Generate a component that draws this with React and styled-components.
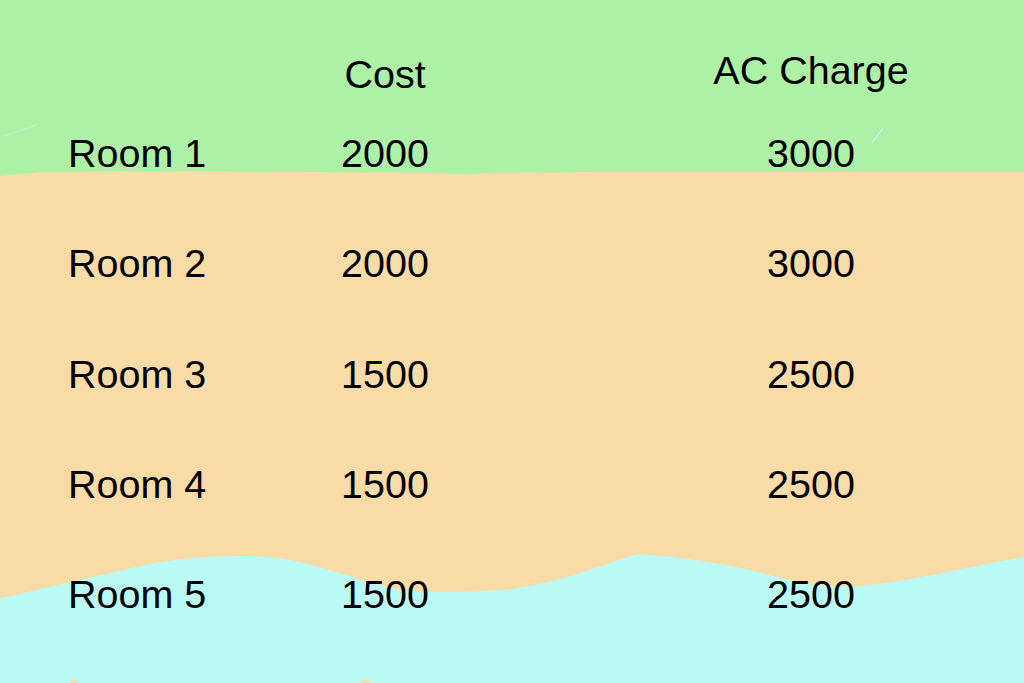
import React from "react";
import styled, { createGlobalStyle } from "styled-components";

const Global = createGlobalStyle`
  html, body { margin: 0; padding: 0; }
  body { font-family: "Liberation Sans", Arial, sans-serif; overflow: hidden; }
`;

const Page = styled.div`
  position: relative;
  width: 1024px;
  height: 683px;
  overflow: hidden;
  background: #f8dba6;
`;

const Backdrop = styled.svg`
  position: absolute;
  inset: 0;
  width: 100%;
  height: 100%;
  z-index: 0;
`;

const Table = styled.div`
  position: relative;
  z-index: 1;
  display: grid;
  grid-template-columns: 200px 234px 1fr;
  align-items: start;
  padding: 50px 0 0 68px;
  font-size: 39.5px;
  color: #000;
`;

const Cell = styled.div`
  line-height: ${(p) => p.$lh || "110.25px"};
  text-align: ${(p) => (p.$align === "left" ? "left" : "center")};
  padding-left: ${(p) => (p.$wide ? "96px" : "0")};
  white-space: nowrap;
`;

const rows = [
  ["Room 1", "2000", "3000"],
  ["Room 2", "2000", "3000"],
  ["Room 3", "1500", "2500"],
  ["Room 4", "1500", "2500"],
  ["Room 5", "1500", "2500"],
];

function Background() {
  return (
    <Backdrop viewBox="0 0 1024 683" preserveAspectRatio="none">
      <path
        d="M0 0 H1024 V172 L600 172 L460 173 L150 171 L40 172 L0 176 Z"
        fill="#adf1a6"
      />
      <path
        d="M0 598 C 40 590, 110 572, 160 562 C 200 556, 240 554, 280 558 C 320 564, 360 582, 400 590 C 440 594, 480 591, 512 589 C 560 582, 600 566, 630 556 L 640 554 C 680 557, 730 564, 770 575 C 800 583, 830 588, 860 586 C 920 580, 980 564, 1024 557 L1024 683 L0 683 Z"
        fill="#b9faf5"
      />
      <ellipse cx="74" cy="683" rx="4" ry="3" fill="#f8dba6" />
      <ellipse cx="366" cy="683" rx="6" ry="3" fill="#f8dba6" />
      <path d="M5 136 L38 124" stroke="#c5f3d6" strokeWidth="1" opacity="0.8" />
      <path d="M872 143 L883 128" stroke="#c5f7e6" strokeWidth="1.5" opacity="0.9" />
    </Backdrop>
  );
}

export default function App() {
  return (
    <>
      <Global />
      <Page>
        <Background />
        <Table>
          <Cell $lh="48px" $align="left" />
          <Cell $lh="48px">Cost</Cell>
          <Cell $lh="40px" $wide>AC Charge</Cell>
          {rows.map(([room, cost, ac]) => (
            <React.Fragment key={room}>
              <Cell $align="left">{room}</Cell>
              <Cell>{cost}</Cell>
              <Cell $wide>{ac}</Cell>
            </React.Fragment>
          ))}
        </Table>
      </Page>
    </>
  );
}
